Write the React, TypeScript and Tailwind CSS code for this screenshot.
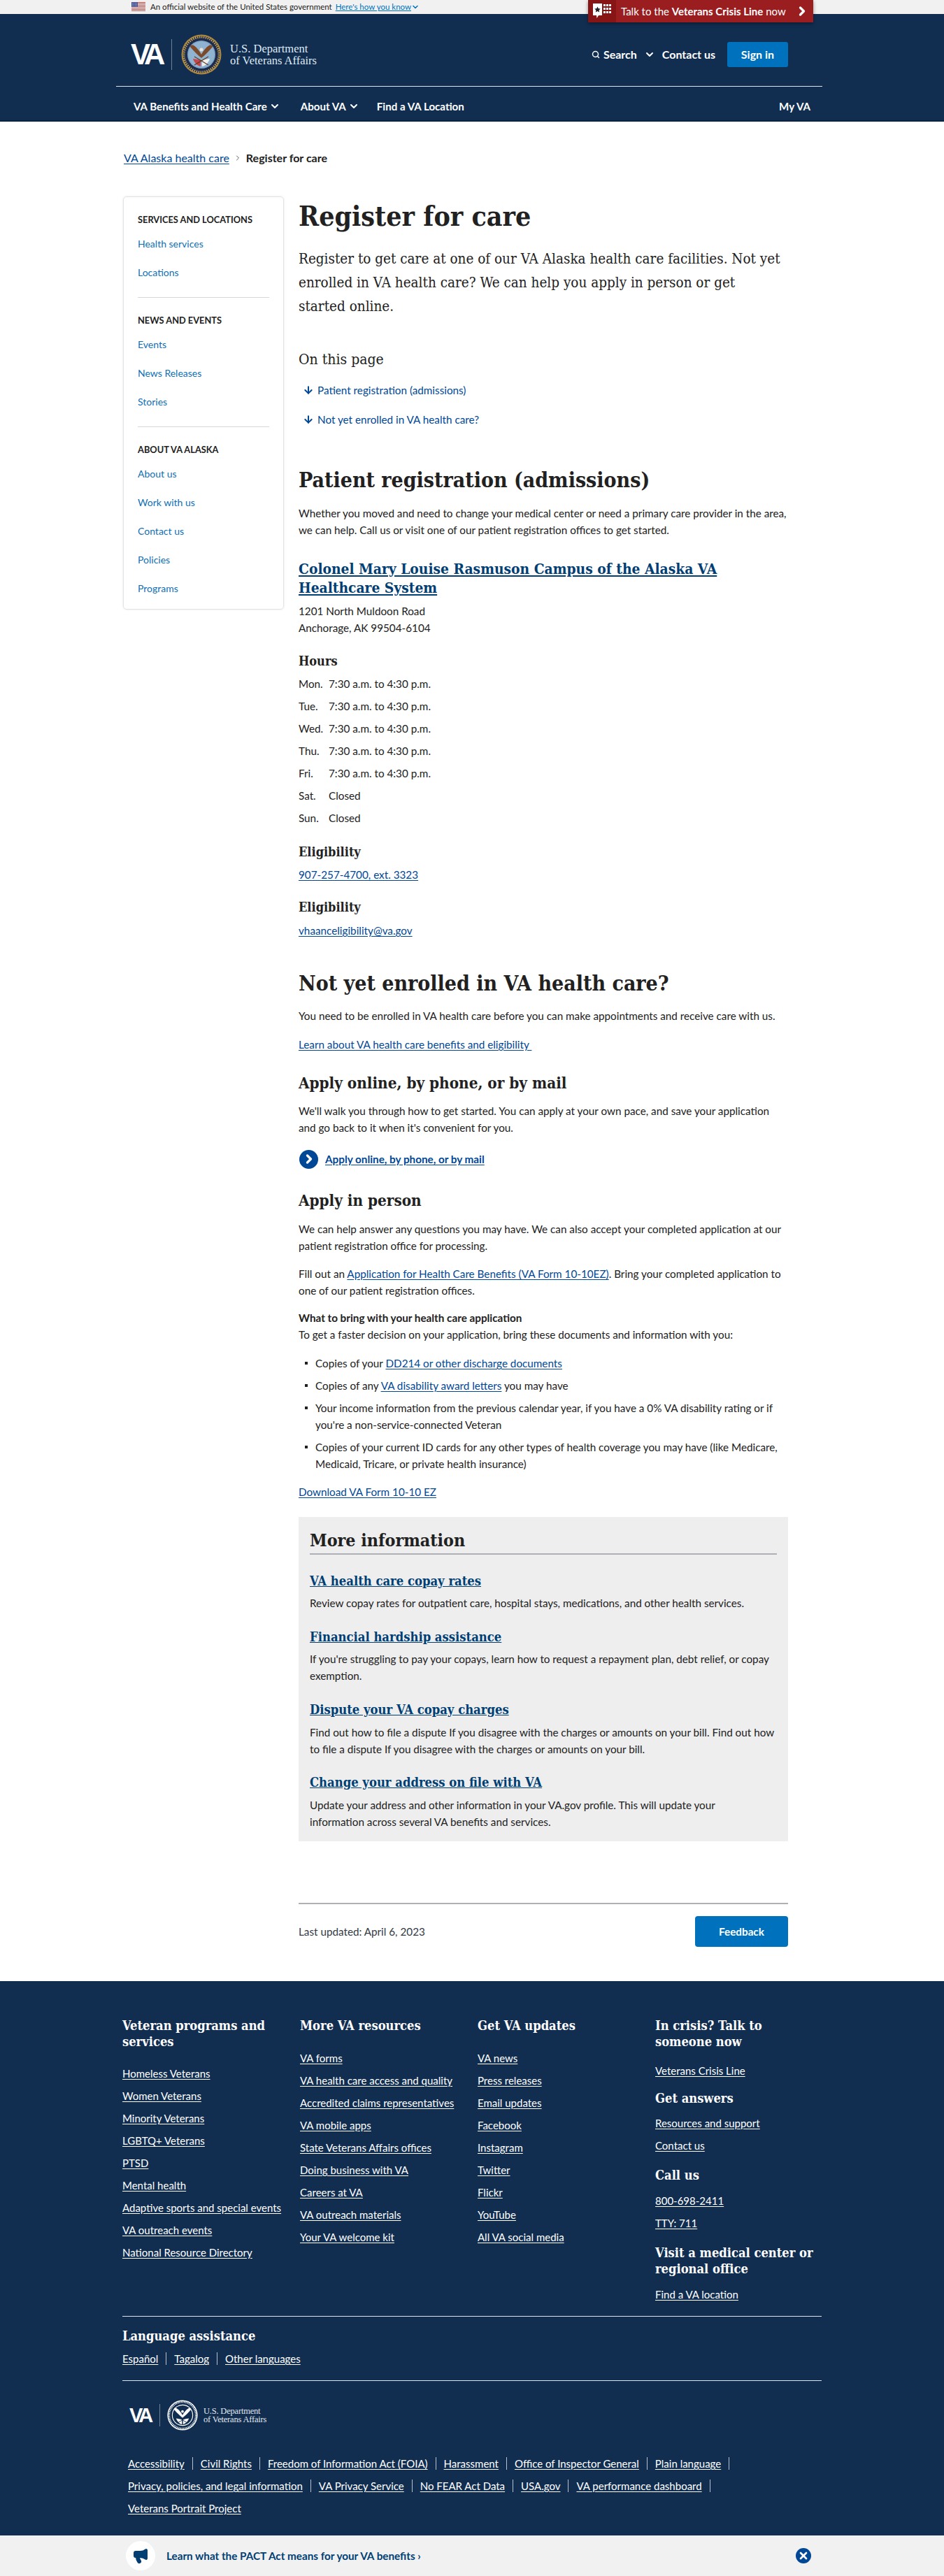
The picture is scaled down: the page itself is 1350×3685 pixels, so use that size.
import { ChevronDown, ChevronRight, Search, ArrowDown, X, Megaphone } from "lucide-react";

const slab = "[font-family:'DejaVu_Serif_Condensed','DejaVu_Serif',serif]";
const bodyLink = "text-[#004795] underline underline-offset-2";
const footLink = "underline underline-offset-2";

const sideNav = [
  { title: "Services and locations", links: ["Health services", "Locations"] },
  { title: "News and events", links: ["Events", "News Releases", "Stories"] },
  { title: "About VA Alaska", links: ["About us", "Work with us", "Contact us", "Policies", "Programs"] },
];

const hours = [
  ["Mon.", "7:30 a.m. to 4:30 p.m."],
  ["Tue.", "7:30 a.m. to 4:30 p.m."],
  ["Wed.", "7:30 a.m. to 4:30 p.m."],
  ["Thu.", "7:30 a.m. to 4:30 p.m."],
  ["Fri.", "7:30 a.m. to 4:30 p.m."],
  ["Sat.", "Closed"],
  ["Sun.", "Closed"],
];

const footerCols = [
  {
    title: "Veteran programs and services",
    tall: true,
    links: ["Homeless Veterans", "Women Veterans", "Minority Veterans", "LGBTQ+ Veterans", "PTSD", "Mental health", "Adaptive sports and special events", "VA outreach events", "National Resource Directory"],
  },
  {
    title: "More VA resources",
    links: ["VA forms", "VA health care access and quality", "Accredited claims representatives", "VA mobile apps", "State Veterans Affairs offices", "Doing business with VA", "Careers at VA", "VA outreach materials", "Your VA welcome kit"],
  },
  {
    title: "Get VA updates",
    links: ["VA news", "Press releases", "Email updates", "Facebook", "Instagram", "Twitter", "Flickr", "YouTube", "All VA social media"],
  },
];

const legalRows = [
  ["Accessibility", "Civil Rights", "Freedom of Information Act (FOIA)", "Harassment", "Office of Inspector General", "Plain language"],
  ["Privacy, policies, and legal information", "VA Privacy Service", "No FEAR Act Data", "USA.gov", "VA performance dashboard"],
];

function Flag() {
  return (
    <svg width="20" height="14" viewBox="0 0 20 14" className="shrink-0">
      <rect width="20" height="14" fill="#fff" />
      {[0, 2, 4, 6, 8, 10, 12].map((y) => (
        <rect key={y} y={y} width="20" height="1" fill="#c9433f" />
      ))}
      <rect width="9" height="7" fill="#3c4a8f" />
      <path d="M1 1.500h7M1 3.500h7M1 5.500h7" stroke="#fff" strokeWidth=".7" strokeDasharray="1 1" />
    </svg>
  );
}

function CrisisIcon() {
  return (
    <svg width="28" height="28" viewBox="0 0 28 28">
      <path d="M1 3h13v17H9l-2.500 4L6 20H1z" fill="#fff" />
      <path d="M7.500 7.500l1.300 2.700 3 .3-2.200 2 .6 3-2.700-1.500-2.700 1.500.6-3-2.200-2 3-.3z" fill="#212121" />
      {[16, 20, 24].map((x) =>
        [4, 9, 14].map((y) => <rect key={`${x}${y}`} x={x} y={y} width="3" height="3" fill="#fff" />)
      )}
    </svg>
  );
}

function Seal({ size, mono }: { size: number; mono?: boolean }) {
  return (
    <svg width={size} height={size} viewBox="0 0 58 58" className="shrink-0">
      <circle cx="29" cy="29" r="28.500" fill={mono ? "#fff" : "#b08a3e"} />
      <circle cx="29" cy="29" r="26.500" fill={mono ? "#112e51" : "#1d2c4d"} />
      <circle cx="29" cy="29" r="25" fill="none" stroke={mono ? "#fff" : "#c9a557"} strokeWidth="3" strokeDasharray="1.5 1.5" />
      <circle cx="29" cy="29" r="20" fill={mono ? "#fff" : "#7fa6c9"} />
      <circle cx="29" cy="29" r="18.500" fill={mono ? "#112e51" : "#8fb3d1"} />
      <path d="M29 34C24 30 18 24 13 18c-1-2 3-3 5-2 5 3 9 9 11 13 2-4 6-10 11-13 2-1 6 0 5 2-5 6-11 12-16 16z" fill={mono ? "#fff" : "#7c4a2a"} />
      <circle cx="29" cy="22" r="2.500" fill={mono ? "#fff" : "#e8e4d8"} />
      <path d="M17 35l11 2v9c-5-1-9-5-11-11z" fill={mono ? "#fff" : "#c7454a"} />
      <path d="M41 35l-11 2v9c5-1 9-5 11-11z" fill={mono ? "#fff" : "#f2f0ea"} />
      <path d="M19 32l20 12M39 32L19 44" stroke={mono ? "#112e51" : "#5a3a20"} strokeWidth="1.200" />
    </svg>
  );
}

function VaLogo({ small }: { small?: boolean }) {
  if (small) {
    return (
      <div className="flex items-center">
        <span className="w-[36px] text-white font-bold text-[29px] leading-[44px] tracking-[-4px] [font-family:'Liberation_Sans',sans-serif]">VA</span>
        <span className="ml-[7px] mr-[10px] h-[32px] w-px bg-white/40" />
        <Seal size={44} mono />
        <div className="ml-[8px] text-[#e1e7ee] text-[12.5px] leading-[12px] tracking-[-0.2px] [font-family:'Liberation_Serif',serif]">
          <div>U.S. Department</div>
          <div>of Veterans Affairs</div>
        </div>
      </div>
    );
  }
  return (
    <div className="flex items-center">
      <span className="w-[47px] text-white font-bold text-[42px] leading-[58px] tracking-[-6px] [font-family:'Liberation_Sans',sans-serif]">VA</span>
      <span className="ml-[11px] mr-[13px] h-[44px] w-px bg-white/40" />
      <Seal size={58} />
      <div className="ml-[12px] text-[#dfe9f2] text-[16.5px] leading-[17px] [font-family:'Liberation_Serif',serif]">
        <div>U.S. Department</div>
        <div>of Veterans Affairs</div>
      </div>
    </div>
  );
}

export default function App() {
  return (
    <div className="w-[1350px] bg-white text-[#212121] text-[15.25px] leading-[24px] [font-family:Lato,sans-serif]">
      {/* gov banner */}
      <div className="relative flex h-5 items-center bg-[#f1f1f1] pl-[188px] text-[11.5px] leading-[20px]">
        <Flag />
        <span className="ml-[7px]">An official website of the United States government</span>
        <a className="ml-[5px] text-[#0071bc] underline">Here's how you know</a>
        <ChevronDown className="h-3 w-3 text-[#0071bc]" strokeWidth={3} />
        <a className="absolute left-[841px] top-0 z-10 flex h-[32px] w-[322px] items-center bg-[#9a1d20] text-white shadow-[0_2px_5px_rgba(0,0,0,0.4)]">
          <span className="flex h-full w-[40px] items-center justify-center bg-[#881516]">
            <CrisisIcon />
          </span>
          <span className="ml-[7px] text-[15px]">
            Talk to the <b>Veterans Crisis Line</b> now
          </span>
          <ChevronRight className="absolute right-[6px] top-[6px] h-5 w-5" strokeWidth={4} />
        </a>
      </div>

      {/* header */}
      <header className="h-[154px] border-b-2 border-[#0b2340] bg-[#112e51] text-white">
        <div className="flex h-[103px] items-center pl-[187px] pr-[223px] pt-[13px]">
          <VaLogo />
          <div className="ml-auto flex items-center font-bold text-[16px]">
            <Search className="h-3 w-3" strokeWidth={3} />
            <span className="ml-[5px]">Search</span>
            <ChevronDown className="ml-[10px] h-4 w-4" strokeWidth={3} />
            <span className="ml-[10px]">Contact us</span>
            <a className="ml-[17px] flex h-[36px] w-[87px] items-center justify-center rounded-[3px] bg-[#0071bc]">Sign in</a>
          </div>
        </div>
        <div className="ml-[166px] w-[1010px] border-t border-[#dce4ef]" />
        <nav className="flex items-center pl-[191px] pr-[191px] pt-[16px] font-bold text-[15.1px]">
          <span>VA Benefits and Health Care</span>
          <ChevronDown className="ml-[3px] h-4 w-4" strokeWidth={3} />
          <span className="ml-[29px]">About VA</span>
          <ChevronDown className="ml-[3px] h-4 w-4" strokeWidth={3} />
          <span className="ml-[25px]">Find a VA Location</span>
          <span className="ml-auto">My VA</span>
        </nav>
      </header>

      {/* breadcrumb */}
      <div className="flex h-[107px] items-start pl-[177px] pt-[40px] text-[16px]">
        <a className={bodyLink}>VA Alaska health care</a>
        <ChevronRight className="mx-[6px] mt-[6px] h-3 w-3 text-[#5b616b]" />
        <b className="font-bold">Register for care</b>
      </div>

      <div className="flex items-start pl-[176px]">
        {/* sidebar */}
        <aside className="w-[230px] rounded-[5px] border border-[#e2e3e6] px-[20px] pb-[17px] pt-[22px] shadow-[0_0_3px_rgba(0,0,0,0.1)]">
          {sideNav.map((group, i) => (
            <div key={group.title}>
              {i > 0 && <div className="mb-[22px] mt-[23px] h-px bg-[#d6d7d9]" />}
              <h4 className="text-[12.8px] font-bold uppercase leading-[20px]">{group.title}</h4>
              <ul>
                {group.links.map((l, j) => (
                  <li key={l} className={`text-[14px] text-[#0f6fb5] ${j === 0 ? "mt-[13px]" : "mt-[17px]"}`}>
                    <a>{l}</a>
                  </li>
                ))}
              </ul>
            </div>
          ))}
        </aside>

        {/* main column */}
        <main className="ml-[21px] w-[700px]">
          <h1 className={`${slab} mt-[4px] text-[39px] font-bold leading-[48px]`}>Register for care</h1>
          <p className={`${slab} mt-[20px] text-[20.5px] leading-[34px]`}>
            Register to get care at one of our VA Alaska health care facilities. Not yet enrolled in VA health care? We can help you apply in person or get
            <br />
            started online.
          </p>
          <h2 className={`${slab} mt-[45px] text-[21px] leading-[28px]`}>On this page</h2>
          <a className="ml-[6px] mt-[18px] flex items-center text-[#004795]">
            <ArrowDown className="h-4 w-4" strokeWidth={3} />
            <span className="ml-[5px]">Patient registration (admissions)</span>
          </a>
          <a className="ml-[6px] mt-[18px] flex items-center text-[#004795]">
            <ArrowDown className="h-4 w-4" strokeWidth={3} />
            <span className="ml-[5px]">Not yet enrolled in VA health care?</span>
          </a>

          <h2 className={`${slab} mt-[55px] text-[30px] font-bold leading-[40px]`}>Patient registration (admissions)</h2>
          <p className="mt-[15px]">
            Whether you moved and need to change your medical center or need a primary care provider in the area, we can help. Call us or visit one of our patient registration offices to get started.
          </p>

          <h3 className={`${slab} mt-[30px] text-[20.8px] font-bold leading-[27px] text-[#003e73] underline`}>
            Colonel Mary Louise Rasmuson Campus of the Alaska VA Healthcare System
          </h3>
          <p className="mt-[8px]">
            1201 North Muldoon Road
            <br />
            Anchorage, AK 99504-6104
          </p>

          <h4 className={`${slab} mt-[24px] text-[18px] font-bold`}>Hours</h4>
          <div className="mt-[8px] flex flex-col gap-[8px]">
            {hours.map(([day, time]) => (
              <div key={day} className="flex">
                <span className="w-[43px]">{day}</span>
                <span>{time}</span>
              </div>
            ))}
          </div>

          <h4 className={`${slab} mt-[25px] text-[18px] font-bold`}>Eligibility</h4>
          <a className={`${bodyLink} mt-[8px] block`}>907-257-4700, ext. 3323</a>
          <h4 className={`${slab} mt-[23px] text-[18px] font-bold`}>Eligibility</h4>
          <a className={`${bodyLink} mt-[9px] block`}>vhaanceligibility@va.gov</a>

          <h2 className={`${slab} mt-[44px] text-[30px] font-bold leading-[40px]`}>Not yet enrolled in VA health care?</h2>
          <p className="mt-[14px]">You need to be enrolled in VA health care before you can make appointments and receive care with us.</p>
          <a className={`${bodyLink} mt-[17px] block`}>Learn about VA health care benefits and eligibility&nbsp;</a>

          <h3 className={`${slab} mt-[27px] text-[22.3px] font-bold leading-[32px]`}>Apply online, by phone, or by mail</h3>
          <p className="mt-[12px]">
            We'll walk you through how to get started. You can apply at your own pace, and save your application and go back to it when it's convenient for you.
          </p>
          <a className="mt-[19px] flex h-[28px] items-center pl-px">
            <span className="flex h-[27px] w-[27px] items-center justify-center rounded-full bg-[#004795] text-white">
              <ChevronRight className="h-5 w-5" strokeWidth={4} />
            </span>
            <span className="ml-[10px] font-bold text-[#004795] underline underline-offset-2">Apply online, by phone, or by mail</span>
          </a>

          <h3 className={`${slab} mt-[29px] text-[22.3px] font-bold leading-[32px]`}>Apply in person</h3>
          <p className="mt-[13px]">
            We can help answer any questions you may have. We can also accept your completed application at our patient registration office for processing.
          </p>
          <p className="mt-[16px]">
            Fill out an <a className={bodyLink}>Application for Health Care Benefits (VA Form 10-10EZ)</a>. Bring your completed application to one of our patient registration offices.
          </p>
          <p className="mt-[15px]">
            <b className="font-bold">What to bring with your health care application</b>
            <br />
            To get a faster decision on your application, bring these documents and information with you:
          </p>
          <ul className="mt-[17px] flex flex-col gap-[8px] pl-[24px]">
            <li className="relative">
              <span className="absolute -left-[15px] top-[10px] h-[4px] w-[4px] bg-[#212121]" />
              Copies of your <a className={bodyLink}>DD214 or other discharge documents</a>
            </li>
            <li className="relative">
              <span className="absolute -left-[15px] top-[10px] h-[4px] w-[4px] bg-[#212121]" />
              Copies of any <a className={bodyLink}>VA disability award letters</a> you may have
            </li>
            <li className="relative">
              <span className="absolute -left-[15px] top-[10px] h-[4px] w-[4px] bg-[#212121]" />
              Your income information from the previous calendar year, if you have a 0% VA disability rating or if you're a non-service-connected Veteran
            </li>
            <li className="relative">
              <span className="absolute -left-[15px] top-[10px] h-[4px] w-[4px] bg-[#212121]" />
              Copies of your current ID cards for any other types of health coverage you may have (like Medicare, Medicaid, Tricare, or private health insurance)
            </li>
          </ul>
          <a className={`${bodyLink} mt-[16px] block`}>Download VA Form 10-10 EZ</a>

          {/* more information */}
          <section className="mt-[24px] bg-[#eeeeee] px-[16px] pb-[16px] pt-[16px]">
            <h2 className={`${slab} border-b-2 border-[#aeb0b5] text-[24.8px] font-bold leading-[36px]`}>More information</h2>
            <h3 className={`${slab} mt-[26px] text-[18.3px] font-bold text-[#003e73] underline`}>VA health care copay rates</h3>
            <p className="mt-[7px]">Review copay rates for outpatient care, hospital stays, medications, and other health services.</p>
            <h3 className={`${slab} mt-[25px] text-[18.3px] font-bold text-[#003e73] underline`}>Financial hardship assistance</h3>
            <p className="mt-[7px]">If you're struggling to pay your copays, learn how to request a repayment plan, debt relief, or copay exemption.</p>
            <h3 className={`${slab} mt-[25px] text-[18.3px] font-bold text-[#003e73] underline`}>Dispute your VA copay charges</h3>
            <p className="mt-[8px]">
              Find out how to file a dispute If you disagree with the charges or amounts on your bill. Find out how to file a dispute If you disagree with the charges or amounts on your bill.
            </p>
            <h3 className={`${slab} mt-[24px] text-[18.3px] font-bold text-[#003e73] underline`}>Change your address on file with VA</h3>
            <p className="mt-[8px]">
              Update your address and other information in your VA.gov profile. This will update your
              <br />
              information across several VA benefits and services.
            </p>
          </section>

          <div className="mt-[88px] flex items-center justify-between border-t-2 border-[#aeb0b5] pb-[49px] pt-[17px]">
            <span className="text-[#323a45]">Last updated: April 6, 2023</span>
            <a className="flex h-[44px] w-[133px] items-center justify-center rounded-[4px] bg-[#0071bc] font-bold text-white">Feedback</a>
          </div>
        </main>
      </div>

      {/* footer */}
      <footer className="bg-[#112e51] pb-[27px] pl-[175px] pt-[52px] text-white text-[15px]">
        <div className="grid w-[1016px] grid-cols-4">
          {footerCols.map((col) => (
            <div key={col.title}>
              <h2 className={`${slab} pr-[30px] text-[18.2px] font-bold leading-[23px]`}>{col.title}</h2>
              <ul className={`${col.tall ? "mt-[22px]" : "mt-[23px]"} flex flex-col gap-[8px]`}>
                {col.links.map((l) => (
                  <li key={l}>
                    <a className={footLink}>{l}</a>
                  </li>
                ))}
              </ul>
            </div>
          ))}
          <div>
            <h2 className={`${slab} text-[18.2px] font-bold leading-[23px]`}>
              In crisis? Talk to
              <br />
              someone now
            </h2>
            <a className={`${footLink} mt-[18px] block`}>Veterans Crisis Line</a>
            <h2 className={`${slab} mt-[16px] text-[18.2px] font-bold leading-[23px]`}>Get answers</h2>
            <a className={`${footLink} mt-[12px] block`}>Resources and support</a>
            <a className={`${footLink} mt-[8px] block`}>Contact us</a>
            <h2 className={`${slab} mt-[19px] text-[18.2px] font-bold leading-[23px]`}>Call us</h2>
            <a className={`${footLink} mt-[13px] block`}>800-698-2411</a>
            <a className={`${footLink} mt-[8px] block`}>TTY: 711</a>
            <h2 className={`${slab} mt-[19px] text-[18.2px] font-bold leading-[23px]`}>Visit a medical center or regional office</h2>
            <a className={`${footLink} mt-[13px] block`}>Find a VA location</a>
          </div>
        </div>

        <div className="mt-[19px] w-[1000px] border-t border-[#dce4ef]" />
        <h2 className={`${slab} mt-[16px] text-[18.2px] font-bold`}>Language assistance</h2>
        <div className="mt-[8px] flex items-center">
          <a className={footLink}>Español</a>
          <span className="mx-[11px] h-[18px] w-px bg-white/70" />
          <a className={footLink}>Tagalog</a>
          <span className="mx-[11px] h-[18px] w-px bg-white/70" />
          <a className={footLink}>Other languages</a>
        </div>
        <div className="mt-[19px] w-[1000px] border-t border-[#dce4ef]" />

        <div className="ml-[10px] mt-[27px]">
          <VaLogo small />
        </div>

        <div className="ml-[8px] mt-[35px] flex flex-col items-start gap-[8px]">
          {legalRows.map((row, i) => (
            <div key={i} className="flex items-center">
              {row.map((l) => (
                <span key={l} className="flex items-center">
                  <a className={footLink}>{l}</a>
                  <span className="mx-[11px] h-[18px] w-px bg-white/70" />
                </span>
              ))}
            </div>
          ))}
          <a className={footLink}>Veterans Portrait Project</a>
        </div>
      </footer>

      {/* promo banner */}
      <div className="flex h-[58px] items-center bg-[#f1f1f1] pl-[180px] pr-[190px]">
        <span className="flex h-[42px] w-[42px] items-center justify-center rounded-full bg-white text-[#003e73]">
          <Megaphone className="h-6 w-6" fill="#003e73" />
        </span>
        <a className="ml-[16px] font-bold text-[#003e73]">Learn what the PACT Act means for your VA benefits ›</a>
        <span className="ml-auto flex h-[22px] w-[22px] items-center justify-center rounded-full bg-[#004795] text-white">
          <X className="h-4 w-4" strokeWidth={4} />
        </span>
      </div>
    </div>
  );
}
